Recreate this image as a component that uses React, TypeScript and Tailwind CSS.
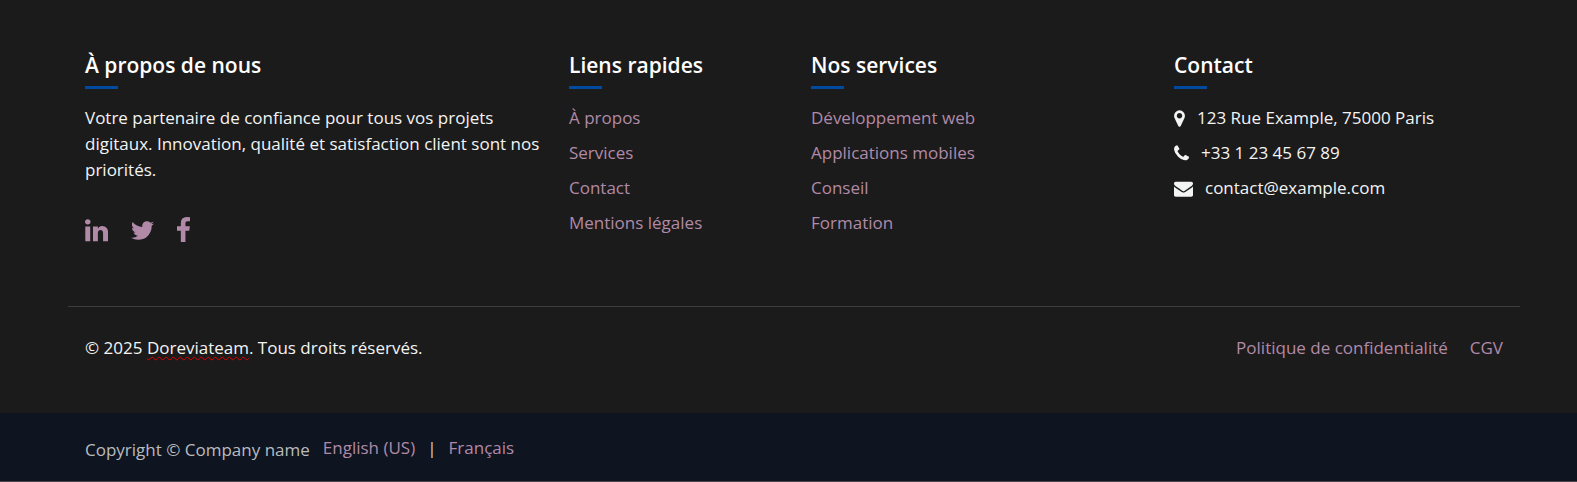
import type { ReactNode } from 'react';

type IconProps = { viewBox: string; path: string; className: string };

const Icon = ({ viewBox, path, className }: IconProps) => (
  <svg viewBox={viewBox} className={className} fill="currentColor" aria-hidden="true">
    <path d={path} />
  </svg>
);

const LINKEDIN =
  'M477 625v991h-330v-991h330zm21-306q1 73-50.5 122t-135.5 49h-2q-82 0-132-49t-50-122q0-74 51.5-122.5t134.5-48.5 133 48.5 51 122.5zm1166 729v568h-329v-530q0-105-40.5-164.5t-126.5-59.5q-63 0-105.5 34.5t-63.5 85.5q-11 30-11 81v553h-329q2-399 2-647t-1-296l-1-48h329v144h-2q20-32 41-56t56.5-52 87-43.5 114.5-15.5q171 0 278 113.5t107 332.5z';
const TWITTER =
  'M1684 408q-67 98-162 167 1 14 1 42 0 130-38 259.5t-115.5 248.5-184.5 210.5-258 146-323 54.5q-271 0-496-145 35 4 78 4 225 0 401-138-105-2-188-64.5t-114-159.5q33 5 61 5 43 0 85-11-112-23-185.5-111.5t-73.5-205.5v-4q68 38 146 41-66-44-105-115t-39-154q0-88 44-163 121 149 294.5 238.5t371.5 99.5q-8-38-8-74 0-134 94.5-228.5t228.5-94.5q140 0 236 102 109-21 205-78-37 115-142 178 93-10 186-50z';
const FACEBOOK =
  'M1343 12v264h-157q-86 0-116 36t-30 108v189h293l-39 296h-254v759h-306v-759h-255v-296h255v-218q0-186 104-288.5t277-102.5q147 0 228 12z';
const MARKER =
  'M1152 640q0-106-75-181t-181-75-181 75-75 181 75 181 181 75 181-75 75-181zm256 0q0 109-33 179l-364 774q-16 33-47.5 52t-67.5 19-67.5-19-46.5-52l-365-774q-33-70-33-179 0-212 150-362t362-150 362 150 150 362z';
const PHONE =
  'M1600 1240q0 27-10 70.5t-21 68.5q-21 50-122 106-94 51-186 51-27 0-53-3.5t-57.5-12.5-47-14.5-55.5-20.5-49-18q-98-35-175-83-127-79-264-216t-216-264q-48-77-83-175-3-9-18-49t-20.5-55.5-14.5-47-12.5-57.5-3.5-53q0-92 51-186 56-101 106-122 25-11 68.5-21t70.5-10q14 0 21 3 18 6 53 76 11 19 30 54t35 63.5 31 53.5q3 4 17.5 25t21.5 35.5 7 28.5q0 20-28.5 50t-62 55-62 53-28.5 46q0 9 5 22.5t8.5 20.5 14 24 11.5 19q76 137 174 235t235 174q2 1 19 11.5t24 14 20.5 8.5 22.5 5q18 0 46-28.5t53-62 55-62 50-28.5q14 0 28.5 7t35.5 21.5 25 17.5q25 15 53.5 31t63.5 35 54 30q70 35 76 53 3 7 3 21z';
const ENVELOPE =
  'M1792 710v794q0 66-47 113t-113 47h-1472q-66 0-113-47t-47-113v-794q44 49 101 87 362 246 497 345 57 42 92.5 65.5t94.5 48 110 24.5h2q51 0 110-24.5t94.5-48 92.5-65.5q170-123 498-345 57-39 100-87zm0-294q0 79-49 151t-122 123q-376 261-468 325-10 7-42.5 31t-54 38.5-52 32.5-57.5 27-50 9h-2q-23 0-50-9t-57.5-27-52-32.5-54-38.5-42.5-31q-91-64-262-182.5t-205-142.5q-62-42-117-115.5t-55-136.5q0-78 41.5-130t118.5-52h1472q65 0 112.5 47t47.5 113z';

const quickLinks = ['À propos', 'Services', 'Contact', 'Mentions légales'];
const services = ['Développement web', 'Applications mobiles', 'Conseil', 'Formation'];

const Column = ({ title, className, children }: { title: string; className: string; children: ReactNode }) => (
  <section className={`pl-[17px] pr-2 ${className}`}>
    <h2 className="text-[21px] leading-[26px] font-semibold text-white">{title}</h2>
    <div className="mt-2 mb-4 h-[3px] w-[33px] bg-[#004a9f]" />
    {children}
  </section>
);

const LinkList = ({ items }: { items: string[] }) => (
  <ul className="flex flex-col gap-[9px]">
    {items.map((item) => (
      <li key={item}>
        <a href="#" className="text-[#b18aa8]">{item}</a>
      </li>
    ))}
  </ul>
);

export default function App() {
  return (
    <footer className="bg-[#1b1b1b] font-['Open_Sans','Noto_Sans',sans-serif] text-[17px] leading-[26px] text-[#f3f4f4]">
      <div className="pt-[52px] pr-[57px] pb-[52px] pl-[68px]">
        <div className="grid grid-cols-12 pb-[61px]">
          <Column title="À propos de nous" className="col-span-4">
            <p>
              Votre partenaire de confiance pour tous vos projets digitaux. Innovation, qualité et satisfaction client sont nos priorités.
            </p>
            <div className="mt-8 flex h-[30px] items-center gap-[23px] text-[#b18aa8]">
              <a href="#" aria-label="LinkedIn"><Icon viewBox="128 0 1536 1792" path={LINKEDIN} className="h-[27px] w-[23px]" /></a>
              <a href="#" aria-label="Twitter"><Icon viewBox="108 0 1576 1792" path={TWITTER} className="h-[27px] w-[23px]" /></a>
              <a href="#" aria-label="Facebook"><Icon viewBox="479 0 864 1792" path={FACEBOOK} className="h-[27px] w-[13px]" /></a>
            </div>
          </Column>
          <Column title="Liens rapides" className="col-span-2">
            <LinkList items={quickLinks} />
          </Column>
          <Column title="Nos services" className="col-span-3">
            <LinkList items={services} />
          </Column>
          <Column title="Contact" className="col-span-3">
            <ul className="flex flex-col gap-[9px]">
              <li className="flex items-center gap-3">
                <Icon viewBox="384 0 1024 1792" path={MARKER} className="h-[19px] w-[11px]" />
                123 Rue Example, 75000 Paris
              </li>
              <li className="flex items-center gap-3">
                <Icon viewBox="192 0 1408 1792" path={PHONE} className="h-[19px] w-[15px]" />
                +33 1 23 45 67 89
              </li>
              <li className="flex items-center gap-3">
                <Icon viewBox="0 0 1792 1792" path={ENVELOPE} className="h-[19px] w-[19px]" />
                contact@example.com
              </li>
            </ul>
          </Column>
        </div>
        <div className="flex flex-wrap justify-between border-t border-[#3d3d3d] px-[17px] pt-7">
          <p>
            © 2025{' '}
            <span className="underline decoration-[#e00000] decoration-wavy decoration-1 underline-offset-2">Doreviateam</span>
            . Tous droits réservés.
          </p>
          <nav className="flex gap-[22px] text-[#b18aa8]">
            <a href="#">Politique de confidentialité</a>
            <a href="#">CGV</a>
          </nav>
        </div>
      </div>
      <div className="flex items-start border-b border-[#4a4248] bg-[#0e1420] px-[85px] pt-[22px] pb-[18px]">
        <p className="pt-[2px] text-[#b9bcbf]">Copyright © Company name</p>
        <nav className="ml-[13px] flex gap-3 text-[#b18aa8]">
          <a href="#">English (US)</a>
          <span className="text-[#d0d2d4]">|</span>
          <a href="#">Français</a>
        </nav>
      </div>
    </footer>
  );
}
